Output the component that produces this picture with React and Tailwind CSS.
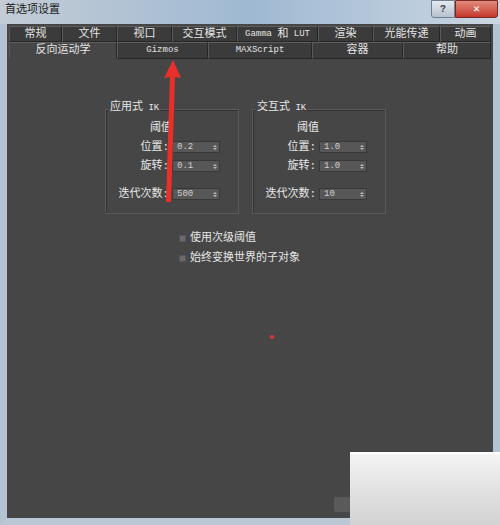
import React from 'react';

const cjk = { fontFamily: '"Liberation Mono", "Noto Sans CJK SC", monospace' };

// latin bits of the labels are drawn smaller, like the bitmap UI font
const L = ({ children }) => <span className="text-[9px]">{children}</span>;

const row1 = [
  ['常规', 53], ['文件', 55], ['视口', 55], ['交互模式', 65],
  [<><L>Gamma&nbsp;</L>和<L>&nbsp;LUT</L></>, 81], ['渲染', 55], ['光能传递', 67], ['动画', 51],
];
const row2 = [
  ['反向运动学', 108, true], [<L>Gizmos</L>, 91], [<L>MAXScript</L>, 104], ['容器', 91], ['帮助', 88],
];

const Tab = ({ label, width, active }) => (
  <div
    style={{ width }}
    className={`flex items-center justify-center border border-[#262626] border-t-[#5e5e5e] border-l-[#5a5a5a] text-[11px] leading-none text-[#e4e4e4] ${
      active ? 'bg-[#464646] border-b-[#464646]' : 'bg-[#3b3b3b]'
    }`}
  >
    {label}
  </div>
);

const Spinner = ({ value }) => (
  <div className="flex h-[12px] w-[48px] items-center bg-[#575757] border border-[#383838]">
    <span className="flex-1 pl-[4px] text-[9px] leading-none text-[#cfcfcf]">{value}</span>
    <div className="flex h-full w-[9px] flex-col items-center justify-center gap-[1px]">
      <span className="block h-0 w-0 border-x-[2px] border-b-[2px] border-x-transparent border-b-[#bbb]" />
      <span className="block h-0 w-0 border-x-[2px] border-t-[2px] border-x-transparent border-t-[#bbb]" />
    </div>
  </div>
);

const Field = ({ label, value }) => (
  <div className="flex items-center justify-end gap-[3px]">
    <span className="text-[11px] leading-none text-[#e6e6e6]">{label}</span>
    <Spinner value={value} />
  </div>
);

const IkGroup = ({ title, pos, rot, iter }) => (
  <div className="relative h-[105px] w-[134px] border border-[#5a5a5a] shadow-[inset_1px_1px_0_#333]">
    <span className="absolute -top-[8px] left-[3px] bg-[#464646] px-[1px] text-[11px] leading-none text-[#e6e6e6]">
      {title}<L>&nbsp;IK</L>
    </span>
    <div className="flex flex-col pr-[18px] pt-[13px]">
      <span className="ml-[44px] text-[11px] leading-none text-[#e6e6e6]">阈值</span>
      <div className="mt-[7px] flex flex-col gap-[7px]">
        <Field label="位置:" value={pos} />
        <Field label="旋转:" value={rot} />
      </div>
      <div className="mt-[16px]">
        <Field label="迭代次数:" value={iter} />
      </div>
    </div>
  </div>
);

const Check = ({ label }) => (
  <div className="flex items-center gap-[4px]">
    <span className="block h-[7px] w-[7px] bg-[#6a6a6a] border border-[#555]" />
    <span className="text-[11px] leading-none text-[#e6e6e6]">{label}</span>
  </div>
);

export default function App() {
  return (
    <div style={cjk} className="relative flex h-[525px] w-[500px] flex-col overflow-hidden bg-[#b9c7d6]">
      {/* title bar */}
      <div className="flex h-[24px] items-start bg-gradient-to-r from-[#c3ccd6] via-[#9fb9d2] to-[#cbd6e2]">
        <span className="ml-[5px] mt-[5px] text-[11px] leading-none text-[#1c1c1c]">首选项设置</span>
        <div className="ml-auto mr-[2px] flex">
          <div className="flex h-[18px] w-[24px] items-center justify-center rounded-bl-[3px] border border-[#6f7f90] bg-gradient-to-b from-[#e3e9ef] to-[#b6c2cf] text-[10px] font-bold text-[#444]">?</div>
          <div className="flex h-[18px] w-[43px] items-center justify-center rounded-br-[3px] border border-[#7a2a22] bg-gradient-to-b from-[#e08a7c] to-[#c4352a] text-[11px] font-bold text-white">✕</div>
        </div>
      </div>

      {/* window body */}
      <div className="flex flex-1 border-x-[7px] border-b-[7px] border-x-[#b4c3d3] border-b-[#bac8d6]">
        <div className="flex flex-1 flex-col bg-[#464646] pt-[2px]">
          <div className="flex flex-col px-[2px]">
            <div className="flex h-[16px]">
              {row1.map(([l, w], i) => <Tab key={i} label={l} width={w} />)}
            </div>
            <div className="flex h-[17px]">
              {row2.map(([l, w, a], i) => <Tab key={i} label={l} width={w} active={a} />)}
            </div>
          </div>

          <div className="flex gap-[13px] pl-[98px] pt-[50px]">
            <IkGroup title="应用式" pos="0.2" rot="0.1" iter="500" />
            <IkGroup title="交互式" pos="1.0" rot="1.0" iter="10" />
          </div>

          <div className="mt-[19px] flex flex-col gap-[9px] pl-[172px]">
            <Check label="使用次级阈值" />
            <Check label="始终变换世界的子对象" />
          </div>
        </div>
      </div>

      {/* red annotation arrow */}
      <svg className="absolute left-[155px] top-[56px]" width="32" height="150" viewBox="0 0 32 150">
        <path d="M18 4 L9 22 L15 21 L11 146 L16 146 L20 21 L26 22 Z" fill="#e8302a" />
      </svg>
      <span className="absolute left-[270px] top-[335px] block h-[4px] w-[4px] rounded-full bg-[#d83a30]" />

      {/* watermark */}
      <div className="absolute left-[350px] top-[452px] h-[73px] w-[150px] bg-gradient-to-b from-[#f4f4f4] via-[#e2e2e2] to-[#d2d2d2] border-t-2 border-white" />
      <div className="absolute left-[334px] top-[497px] h-[15px] w-[16px] rounded-[2px] bg-[#5a5a5a]" />
    </div>
  );
}
